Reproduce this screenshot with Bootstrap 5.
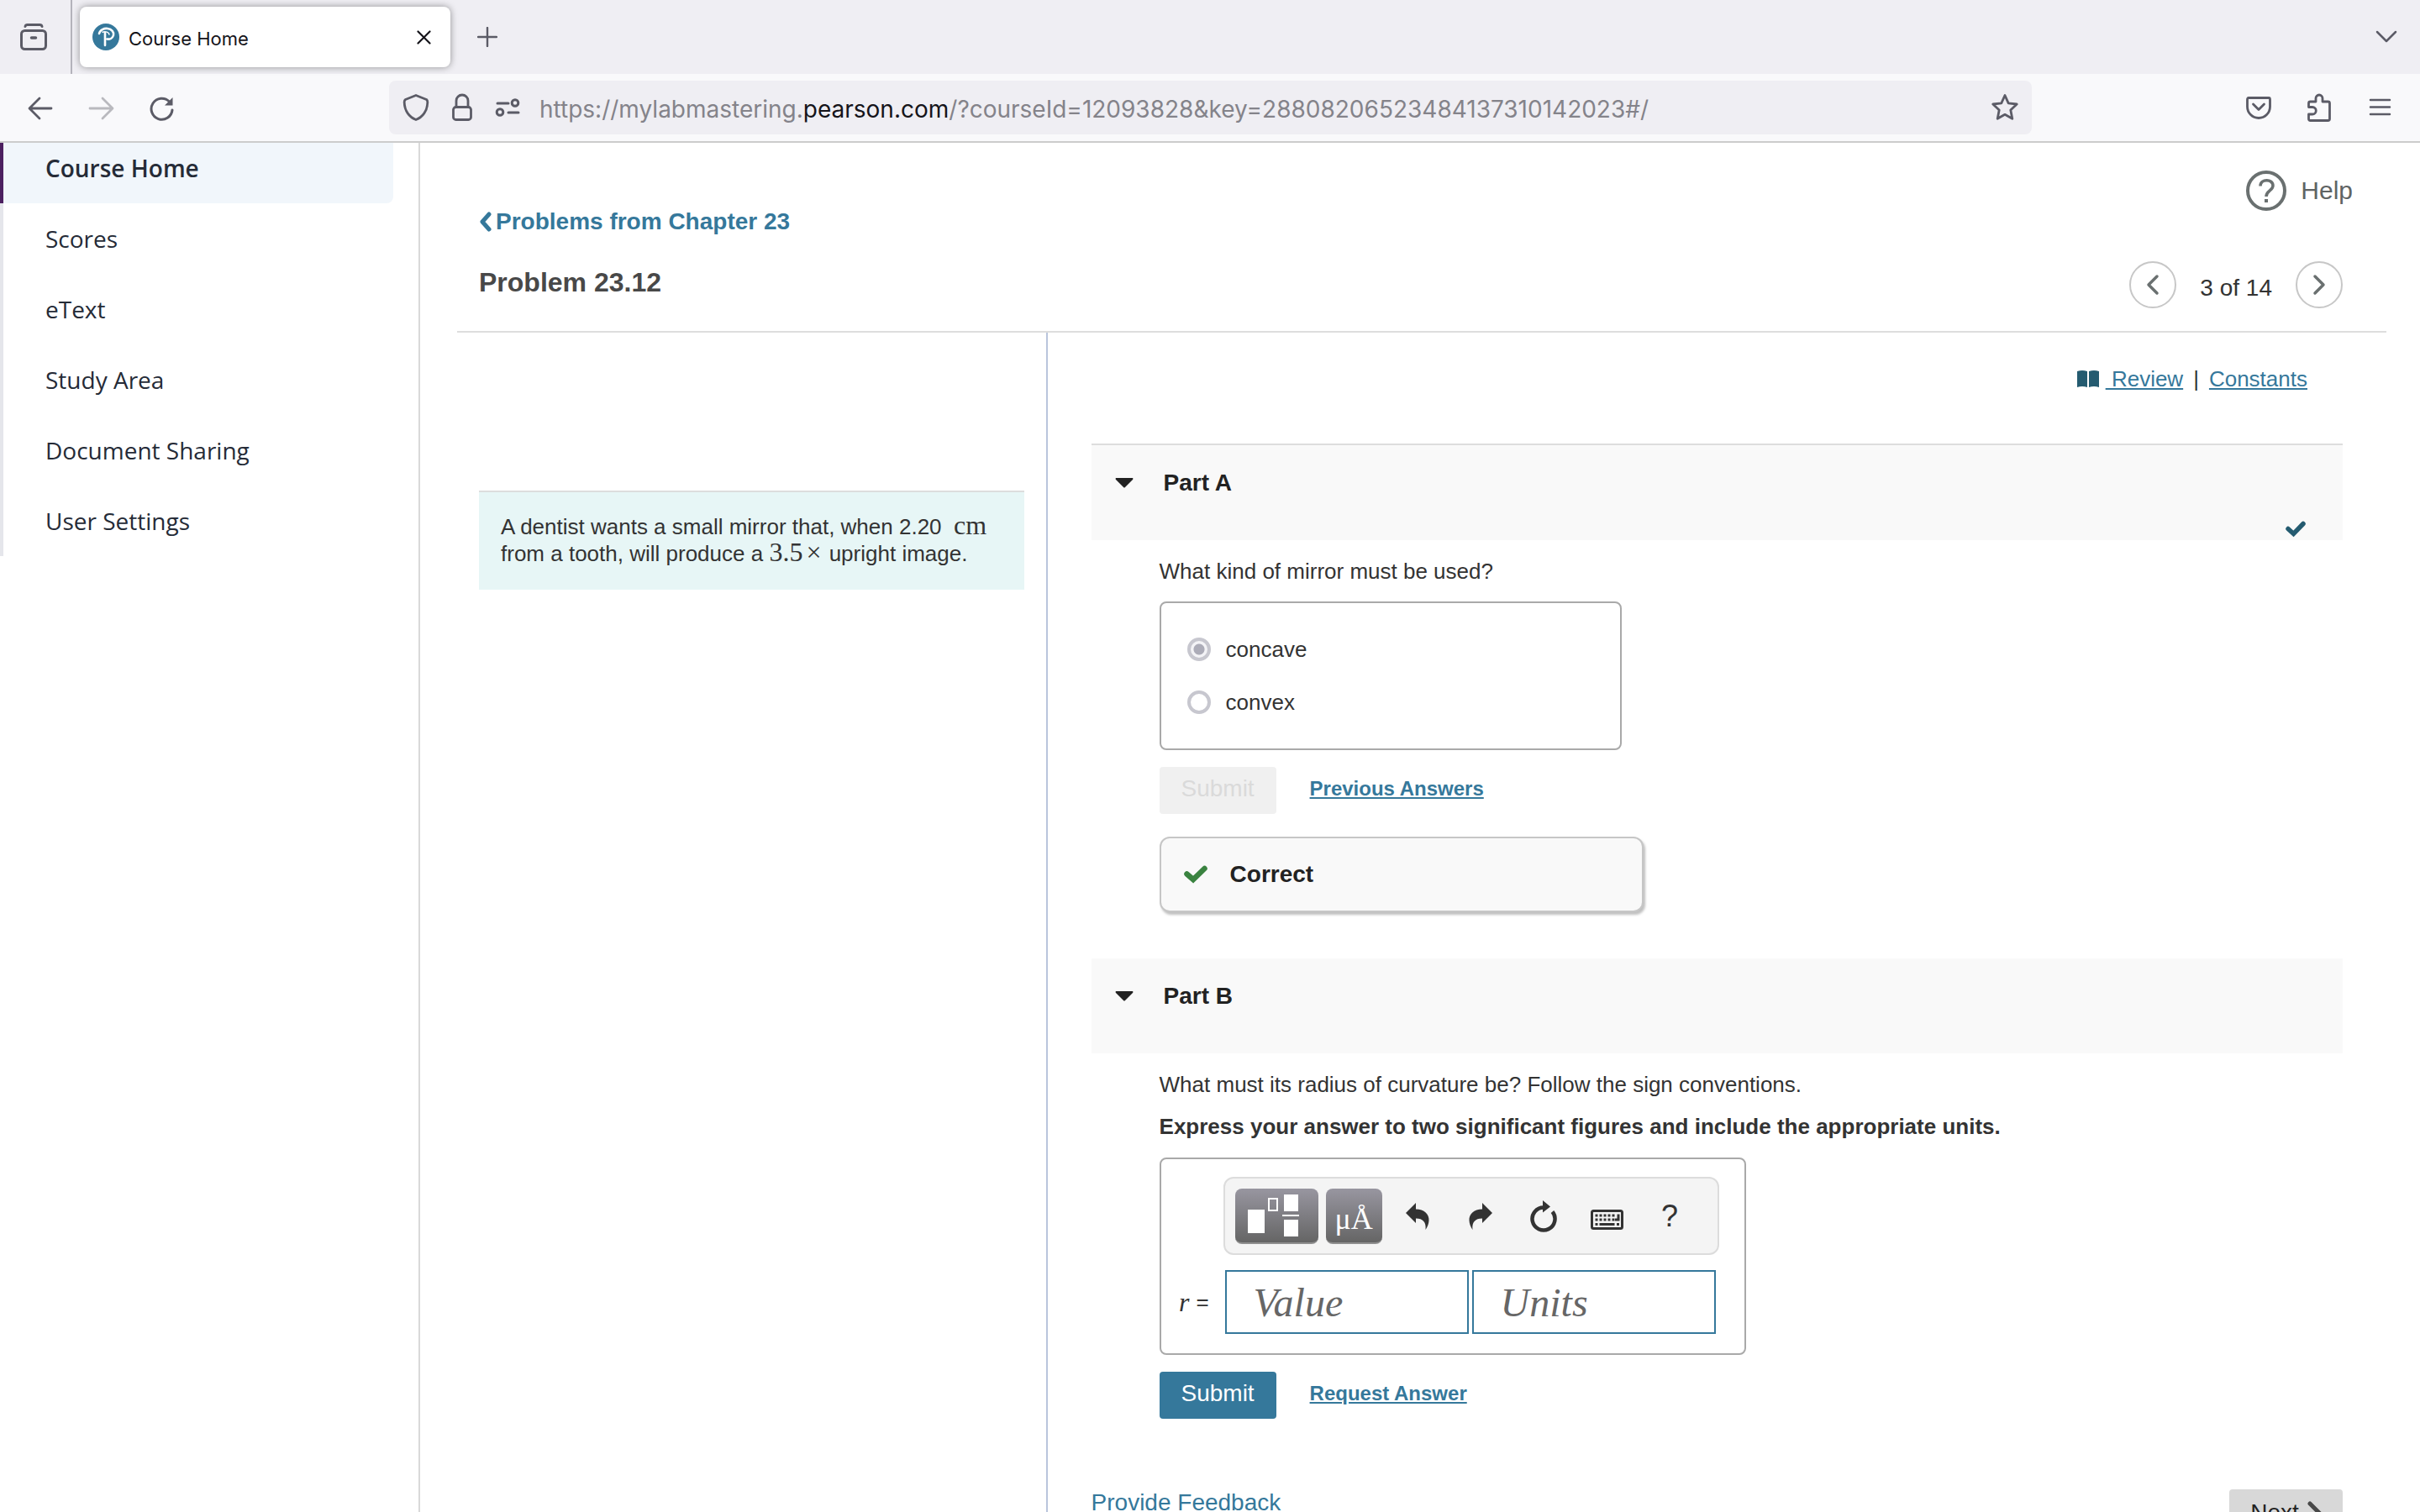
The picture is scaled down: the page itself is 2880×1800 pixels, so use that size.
<!DOCTYPE html>
<html lang="en">
<head>
<meta charset="utf-8">
<meta name="viewport" content="width=device-width, initial-scale=1">
<title>Course Home</title>
<link href="https://cdn.jsdelivr.net/npm/bootstrap@5.3.0/dist/css/bootstrap.min.css" rel="stylesheet">
<style>
body{font-family:"Liberation Sans",Arial,sans-serif;font-size:26px;line-height:32px;color:#333;background:#fff}
svg{display:block;flex:none}
button{color:inherit}
.plain{background:none;border:0;padding:0}
.ui{font-family:Inter,sans-serif}
/* browser chrome */
.strip{height:88px;background:#efeef3;color:#5b5b66;padding-right:24px}
.view-cell{width:86px;height:88px;border-right:2px solid #b4b3bb;padding-left:24px}
.tab-item{width:441px;height:72px;margin-left:9px;background:#fff;border-radius:8px;box-shadow:0 0 8px rgba(0,0,0,.4);padding:0 23px 0 15px;color:#15141a;font-size:22px;gap:11px}
.bar{height:82px;background:#f9f9fb;border-bottom:2px solid #ccc;color:#5b5b66}
.bar-left{width:463px;padding-left:32px;gap:40px}
.bar-right{width:462px;padding-right:32px;gap:40px}
.url{height:64px;background:#efeef3;border-radius:8px;padding:0 16px;gap:23px}
.url-input{font-size:28px;line-height:40px;color:#84838a}
.url-input b{font-weight:400;color:#15141a}
/* sidebar */
.side{width:500px;border-right:2px solid #d9d9d9}
.side-nav{margin-top:-12px;font-family:"Open Sans",sans-serif;font-size:28px}
.side-nav a{height:84px;width:468px;padding-left:50px;border-left:4px solid #e5e6eb;color:#252b37;text-decoration:none}
.side-nav a.active{background:#f1f6fb;border-left-color:#4c2060;border-bottom-right-radius:8px;font-weight:600}
/* page */
a{color:#35789b}
.content{padding:0 40px 0 44px}
.head{border-bottom:2px solid #ddd;height:226px;padding-left:26px}
.back{margin-top:74px;font-size:28px;line-height:40px;font-weight:700;text-decoration:none;gap:5px}
.title{margin:32px 0 0;font-size:32px;line-height:40px;font-weight:700;color:#484848}
.help{margin:33px 40px 0 0;font-size:30px;height:48px;color:#5f6464;gap:17px}
.pager{margin:60px 52px 0 0;gap:28px;font-size:28px}
.round-btn{width:56px;height:56px;border:2px solid #c7c7c7;border-radius:50%;background:#fff;color:#6a7070;padding:0}
.intro{flex:none;width:30.6%;border-right:2px solid #b9c5dc;padding:188px 26px 0 26px}
.intro-box{border-top:2px solid #ddd;background:#e7f6f6;padding:25px 20px 27px 26px}
.math{font-family:"Liberation Serif",serif;font-size:32px;line-height:24px}
.times{padding:0 2px 0 4px}
.work{flex:1;padding:39px 52px 0}
.tools{padding-right:42px;margin-bottom:61px}
.sep{padding:0 12px}
.part-head{background:#f9f9f9;height:113px;padding:25px 44px 0 28px;color:#222}
.part-head.first{border-top:2px solid #ddd;height:115px}
.part-head h2{font-size:28px;line-height:40px;font-weight:700;margin:0;gap:36px}
.part-check{height:45px}
.part-body{padding:21px 0 0 81px}
.hint{margin-top:18px}
.choices{width:550px;margin-top:20px;border:2px solid #a9a9a9;border-radius:8px;padding:23px 31px 24px}
.choice{height:63px;gap:18px}
.choice input{appearance:none;width:28px;height:28px;margin:0;border:4px solid #c7c7cf;border-radius:50%;background:#fff}
.choice input:checked{background:radial-gradient(circle,#acacb8 0 6px,#f3f3f6 7px)}
.actions{margin-top:20px;gap:40px}
.actions a{font-size:24px;font-weight:700;padding-bottom:4px}
.btn-submit,.btn-submit:disabled{width:139px;height:56px;border:0;border-radius:4px;background:#35789b;color:#fff;font-size:28px;line-height:32px;padding:0 0 4px;opacity:1}
.btn-submit:disabled{background:#f0f0f0;color:#dadada}
.result{width:576px;height:90px;margin-top:27px;border:2px solid #c6c6c6;border-radius:12px;background:#f9f9f9;box-shadow:2px 3px 3px rgba(0,0,0,.25);padding-left:27px;gap:27px;font-size:28px;font-weight:700;color:#222}
.part-b{margin-top:55px}
.answer{width:698px;margin-top:21px;border:2px solid #a9a9a9;border-radius:8px;padding:21px 0 23px;display:grid;grid-template-columns:74px 590px;row-gap:18px}
.toolbar{grid-column:2;height:93px;border:2px solid #dcdcdc;border-radius:12px;background:#f4f4f4;padding-left:12px}
.dark-btn{height:66px;border:0;border-bottom:2px solid #8f8f8f;border-radius:8px;background:linear-gradient(#9896a0,#656565);color:#fff;padding:0;margin-right:9px}
.dark-btn.tpl{width:99px}.dark-btn.mu{width:67px;margin-right:5px;padding-top:8px;font-family:"Liberation Serif",serif;font-size:36px}
.icon-btn{width:75px;height:66px;font-size:36px;display:flex;align-items:center;justify-content:center}
.r-label{padding-right:17px}
.fields{gap:4px;padding-left:2px}
.fields input{width:290px;height:76px;border:2px solid #35789b;border-radius:0;background:#fff;font:italic 48px/60px "Liberation Serif",serif;padding:0 32px}
.fields input::placeholder{color:#666;opacity:1}
.foot{margin-top:84px;font-size:28px}
.foot a{text-decoration:none}
.next{width:135px;height:56px;border:0;border-radius:4px;background:#d8d8d8;color:#222;gap:10px}
</style>
<script src="https://cdn.jsdelivr.net/npm/bootstrap@5.3.0/dist/js/bootstrap.bundle.min.js"></script>
</head>
<body class="vh-100 d-flex flex-column overflow-hidden">
<header class="ui flex-shrink-0">
  <div class="strip d-flex align-items-center">
    <div class="view-cell d-flex align-items-center">
      <button class="plain" aria-label="Firefox View"><svg width="32" height="32" viewBox="0 0 32 32" fill="none" stroke="currentColor" stroke-width="3" stroke-linecap="round"><path d="M6 3.5Q6.500 1.500 8.500 1.500H23.500Q25.500 1.500 26 3.500"/><rect x="1.500" y="8.500" width="29" height="22" rx="4"/><path d="M13.500 17h5" stroke-width="3.500"/></svg></button>
    </div>
    <div class="tab-item d-flex align-items-center">
      <svg width="32" height="32" viewBox="0 0 32 32"><circle cx="16" cy="16" r="16" fill="#35789b"/><path d="M8 12C9 7.500 14 5.500 18 6c5 .6 8 4.500 7 8-1 3.500-4.500 5-7.500 4.500M15 11v15" fill="none" stroke="#fff" stroke-width="2.600" stroke-linecap="round"/><path d="M11.500 10.500c4-2 8.500 0 8.500 3" fill="none" stroke="#fff" stroke-width="1.500"/></svg>
      <span class="flex-grow-1 pt-1">Course Home</span>
      <button class="plain" aria-label="Close tab"><svg width="17" height="17" viewBox="0 0 17 17" stroke="currentColor" stroke-width="2.200" stroke-linecap="round"><path d="M1.500 1.500l14 14M15.500 1.500l-14 14"/></svg></button>
    </div>
    <button class="plain ms-4 ps-2" aria-label="New tab"><svg width="24" height="24" viewBox="0 0 24 24" stroke="currentColor" stroke-width="2.400" stroke-linecap="round"><path d="M12 1v22M1 12h22"/></svg></button>
    <button class="plain ms-auto" aria-label="List tabs"><svg width="32" height="24" viewBox="0 0 32 24" fill="none" stroke="currentColor" stroke-width="2.500" stroke-linecap="round" stroke-linejoin="round"><path d="M5 6l11 11L27 6"/></svg></button>
  </div>
  <div class="bar d-flex align-items-center">
    <div class="bar-left d-flex align-items-center flex-shrink-0">
      <button class="plain" aria-label="Back"><svg width="32" height="32" viewBox="0 0 32 32" fill="none" stroke="currentColor" stroke-width="2.800" stroke-linecap="round" stroke-linejoin="round"><path d="M15 5L3 17l12 12M4 17h25"/></svg></button>
      <button class="plain" aria-label="Forward"><svg width="32" height="32" viewBox="0 0 32 32" fill="none" stroke="#b9b9be" stroke-width="2.800" stroke-linecap="round" stroke-linejoin="round"><path d="M18 5l12 12-12 12M29 17H3"/></svg></button>
      <button class="plain" aria-label="Reload"><svg width="32" height="32" viewBox="0 0 32 32" fill="none" stroke="currentColor" stroke-width="3" stroke-linecap="round"><path d="M29 19A12.500 12.500 0 1 1 25.500 9"/><path d="M29.500 4v9.500h-9.500z" fill="currentColor" stroke="none"/></svg></button>
    </div>
    <div class="url d-flex align-items-center flex-grow-1">
      <svg width="32" height="36" viewBox="0 0 32 36" fill="none" stroke="#5b5b66" stroke-width="2.800" stroke-linejoin="round"><path d="M16 3.500L28.500 8.500Q30 9.500 29.800 12C29.500 22 24 29.500 16 32.500 8 29.500 2.500 22 2.200 12Q2 9.500 3.500 8.500Z"/></svg>
      <svg width="32" height="36" viewBox="0 0 32 36" fill="none" stroke="#5b5b66" stroke-width="2.800"><rect x="5.500" y="17.500" width="21" height="15" rx="3"/><path d="M9 17v-7a7 7 0 0 1 14 0v7"/></svg>
      <svg width="30" height="24" viewBox="0 0 30 24" fill="none" stroke="#5b5b66" stroke-width="3" stroke-linecap="round"><path d="M3 7h13M16 18h12"/><circle cx="24" cy="6.500" r="3.800"/><circle cx="6" cy="17.500" r="3.800"/></svg>
      <div class="url-input flex-grow-1 pt-1">https://mylabmastering.<b>pearson.com</b>/?courseId=12093828&amp;key=28808206523484137310142023#/</div>
      <button class="plain" aria-label="Bookmark"><svg width="32" height="34" viewBox="0 0 32 34" fill="none" stroke="#5b5b66" stroke-width="2.800" stroke-linejoin="round"><path d="M16 2.500l4.200 9.300 10 1.200-7.400 6.900 2 10.400-8.800-5-8.800 5 2-10.400L1.800 13l10-1.200z"/></svg></button>
    </div>
    <div class="bar-right d-flex align-items-center justify-content-end flex-shrink-0">
      <svg width="32" height="32" viewBox="0 0 32 32" fill="none" stroke="currentColor" stroke-width="2.800" stroke-linecap="round" stroke-linejoin="round"><path d="M4 4.500h24q1.500 0 1.500 2V15a13.500 13.500 0 0 1-27 0V6.500q0-2 1.500-2z"/><path d="M9.500 12l6.500 6.500 6.500-6.500"/></svg>
      <svg width="32" height="34" viewBox="0 0 32 34" fill="none" stroke="currentColor" stroke-width="2.800" stroke-linejoin="round"><path d="M3.500 12q0-2 2-2H12V6a4 4 0 0 1 8 0v4h6.500q2 0 2 2V30.500q0 2-2 2H5.500q-2 0-2-2V25H8a4 4 0 0 0 0-8.500H3.500z"/></svg>
      <button class="plain" aria-label="Menu"><svg width="32" height="32" viewBox="0 0 32 32" stroke="currentColor" stroke-width="2.500" stroke-linecap="round"><path d="M5 7h23M5 15.500h23M5 24h23"/></svg></button>
    </div>
  </div>
</header>

<div class="d-flex flex-grow-1 overflow-hidden">
  <aside class="side flex-shrink-0">
    <nav class="side-nav d-flex flex-column" aria-label="Course">
      <a class="active d-flex align-items-center" href="#">Course Home</a>
      <a class="d-flex align-items-center" href="#">Scores</a>
      <a class="d-flex align-items-center" href="#">eText</a>
      <a class="d-flex align-items-center" href="#">Study Area</a>
      <a class="d-flex align-items-center" href="#">Document Sharing</a>
      <a class="d-flex align-items-center" href="#">User Settings</a>
    </nav>
  </aside>

  <main class="content d-flex flex-column flex-grow-1">
    <div class="head d-flex justify-content-between flex-shrink-0">
      <div>
        <a class="back d-flex align-items-center" href="#"><svg width="15" height="24" viewBox="0 0 15 24" fill="none" stroke="currentColor" stroke-width="5" stroke-linecap="round" stroke-linejoin="round"><path d="M12 3L4 12l8 9"/></svg>Problems from Chapter 23</a>
        <h1 class="title">Problem 23.12</h1>
      </div>
      <div class="d-flex flex-column align-items-end">
        <button class="plain help d-flex align-items-center"><svg width="48" height="48" viewBox="0 0 48 48" fill="none" stroke="#6a7070" stroke-width="4"><circle cx="24" cy="24" r="22"/><path d="M17 18.500C17 9.500 32 9.500 32 18c0 6-8 6-8 13" stroke-width="3.500"/><path d="M24 34v4" stroke-width="4"/></svg>Help</button>
        <div class="pager d-flex align-items-center">
          <button class="round-btn d-flex align-items-center justify-content-center" aria-label="Previous item"><svg width="16" height="26" viewBox="0 0 16 26" fill="none" stroke="currentColor" stroke-width="3.500" stroke-linecap="round" stroke-linejoin="round"><path d="M13 3L3 13l10 10"/></svg></button>
          <span class="pt-2">3 of 14</span>
          <button class="round-btn d-flex align-items-center justify-content-center" aria-label="Next item"><svg width="16" height="26" viewBox="0 0 16 26" fill="none" stroke="currentColor" stroke-width="3.500" stroke-linecap="round" stroke-linejoin="round"><path d="M3 3l10 10L3 23"/></svg></button>
        </div>
      </div>
    </div>

    <div class="d-flex flex-grow-1">
      <section class="intro">
        <div class="intro-box">
          A dentist wants a small mirror that, when 2.20 &nbsp;<span class="math">cm</span><br>from a tooth, will produce a <span class="math">3.5<span class="times">×</span></span> upright image.
        </div>
      </section>

      <section class="work">
        <div class="tools d-flex justify-content-end align-items-center">
          <svg class="me-2" width="26" height="22" viewBox="0 0 26 22" fill="#245b70"><path d="M0 2Q6 0 12 2V21Q6 19 0 21zM14 2q6-2 12 0V21q-6-2-12 0z"/></svg>
          <a href="#">&nbsp;Review</a><span class="sep">|</span><a href="#">Constants</a>
        </div>

        <article>
          <div class="part-head first">
            <h2 class="d-flex align-items-center"><svg width="22" height="12" viewBox="0 0 22 12" fill="currentColor"><path d="M1 0h20q1 1 0 2l-9 9q-1 1-2 0L1 2Q0 1 1 0z"/></svg>Part A</h2>
            <div class="part-check d-flex justify-content-end align-items-end"><svg width="24" height="20" viewBox="0 0 24 20" fill="none" stroke="#245b70" stroke-width="5.500" stroke-linejoin="miter" stroke-linecap="round"><path d="M3 9.500l6.500 6L21 3.500"/></svg></div>
          </div>
          <div class="part-body">
            <div>What kind of mirror must be used?</div>
            <div class="choices">
              <div class="choice d-flex align-items-center"><input type="radio" name="mirror" id="concave" checked disabled><label for="concave">concave</label></div>
              <div class="choice d-flex align-items-center"><input type="radio" name="mirror" id="convex" disabled><label for="convex">convex</label></div>
            </div>
            <div class="actions d-flex align-items-center">
              <button class="btn btn-submit" disabled>Submit</button>
              <a href="#">Previous Answers</a>
            </div>
            <div class="result d-flex align-items-center"><svg width="28" height="22" viewBox="0 0 28 22" fill="none" stroke="#3a8340" stroke-width="6.500" stroke-linecap="round"><path d="M3.500 10.500l7.500 6.500L24.500 4"/></svg>Correct</div>
          </div>
        </article>

        <article class="part-b">
          <div class="part-head">
            <h2 class="d-flex align-items-center"><svg width="22" height="12" viewBox="0 0 22 12" fill="currentColor"><path d="M1 0h20q1 1 0 2l-9 9q-1 1-2 0L1 2Q0 1 1 0z"/></svg>Part B</h2>
          </div>
          <div class="part-body">
            <div>What must its radius of curvature be? Follow the sign conventions.</div>
            <div class="hint fw-bold">Express your answer to two significant figures and include the appropriate units.</div>
            <div class="answer">
              <div class="toolbar d-flex align-items-center">
                <button class="dark-btn tpl" aria-label="Templates"><svg width="99" height="64" viewBox="0 0 99 64" fill="#fff"><path d="M15 25h20v28H15zM58 7h17v20H58zM58 37h17v20H58zM56 31h20v2H56z"/><path d="M40 12h10v14H40z" fill="none" stroke="#fff" stroke-width="2"/></svg></button>
                <button class="dark-btn mu" aria-label="Symbols">μÅ</button>
                <button class="plain icon-btn" aria-label="Undo"><svg width="28" height="32" viewBox="0 0 28 32" fill="#333"><path d="M0 12L12 0v7.500c10 0 16 6 15.500 13.500-.2 4-1.500 7-4 11 1-9-3-13.500-11.500-13.500V24z"/></svg></button>
                <button class="plain icon-btn" aria-label="Redo"><svg width="28" height="32" viewBox="0 0 28 32" fill="#333"><path d="M28 12L16 0v7.500C6 7.500 0 13.500.5 21c.2 4 1.500 7 4 11-1-9 3-13.500 11.500-13.500V24z"/></svg></button>
                <button class="plain icon-btn" aria-label="Reset"><svg width="32" height="38" viewBox="0 0 32 38"><path d="M16 8.500A13.500 13.500 0 1 0 26.500 13.500" fill="none" stroke="#333" stroke-width="4.500"/><path d="M15 0l9 7.500-9 7z" fill="#333"/></svg></button>
                <button class="plain icon-btn pt-2" aria-label="Keyboard"><svg width="39" height="24" viewBox="0 0 39 24" fill="none" stroke="#333"><rect x="1.500" y="1.500" width="36" height="21" rx="2" stroke-width="3"/><path d="M5.500 7h25M5.500 12h24" stroke-width="3" stroke-dasharray="3 2"/><path d="M33 5.500V12h-4" stroke-width="3"/><path d="M5.500 17.500h3M10.500 17.500h18M31 17.500h3" stroke-width="3"/></svg></button>
                <button class="plain icon-btn" aria-label="Help with the toolbar">?</button>
              </div>
              <div class="r-label d-flex align-items-center justify-content-end gap-2"><i class="math">r</i><span>=</span></div>
              <div class="fields d-flex">
                <input type="text" placeholder="Value" aria-label="Value">
                <input type="text" placeholder="Units" aria-label="Units">
              </div>
            </div>
            <div class="actions d-flex align-items-center">
              <button class="btn btn-submit">Submit</button>
              <a href="#">Request Answer</a>
            </div>
          </div>
        </article>

        <div class="foot d-flex justify-content-between align-items-start">
          <a href="#">Provide Feedback</a>
          <button class="next d-flex align-items-center justify-content-center">Next<svg width="17" height="28" viewBox="0 0 17 28" fill="none" stroke="#484848" stroke-width="5" stroke-linecap="round"><path d="M3 3l11 11L3 25"/></svg></button>
        </div>
      </section>
    </div>
  </main>
</div>
</body>
</html>
